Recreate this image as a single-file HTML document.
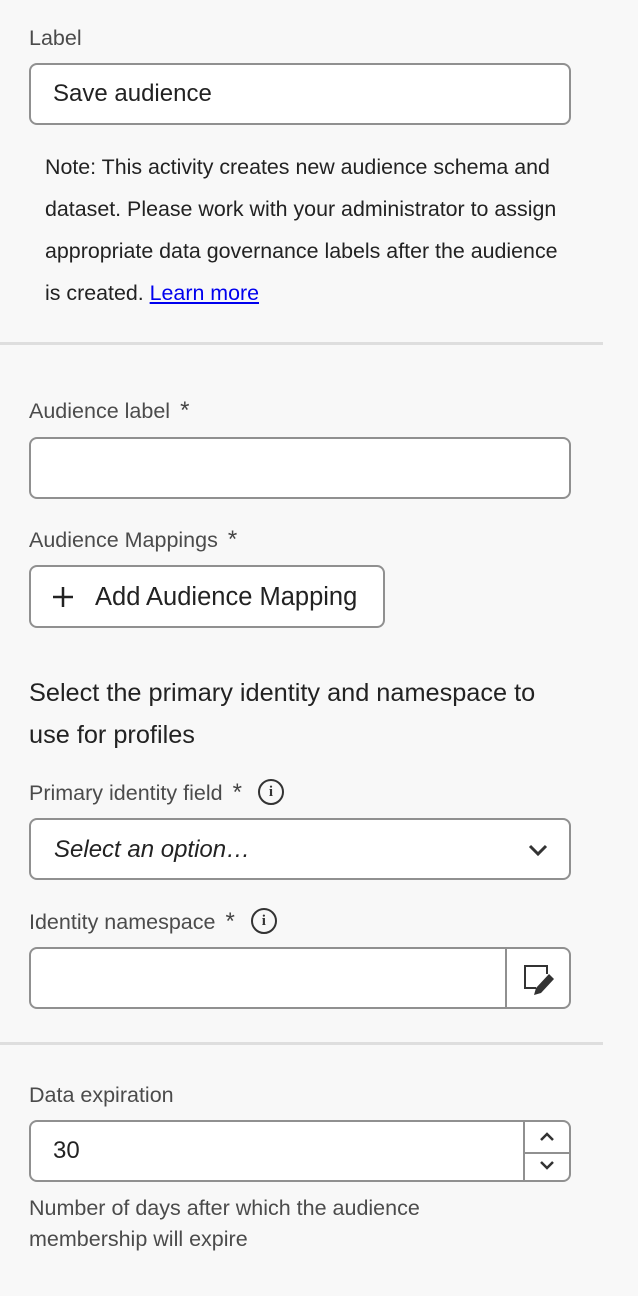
<!DOCTYPE html>
<html><head><style>
*{box-sizing:border-box;margin:0;padding:0}
body{width:638px;height:1296px;background:#f8f8f8;font-family:"Liberation Sans",sans-serif;color:#222;position:relative;overflow:hidden}
.a{position:absolute}
.lbl{font-size:21.5px;color:#4b4b4b;left:29px;line-height:26px;white-space:nowrap}
.inp{left:29px;width:542px;height:62px;background:#fff;border:2px solid #909090;border-radius:8px}
.hr{left:0;width:603px;height:3px;background:#dedede}
.star{font-size:24px;margin-left:10px;color:#444}
.info{display:inline-block;width:26px;height:26px;border:2px solid #333;border-radius:50%;vertical-align:middle;text-align:center;font:bold 15px/22px "Liberation Serif",serif;color:#333;margin-left:16px;margin-top:-4px}
</style></head><body>
<div class="a lbl" style="top:25px">Label</div>
<div class="a inp" style="top:63px"><span class="a" style="left:22px;top:15px;font-size:24px;color:#222">Save audience</span></div>
<div class="a" style="left:45px;top:146px;font-size:21.4px;line-height:42px;color:#222;white-space:nowrap">Note: This activity creates new audience schema and<br>dataset. Please work with your administrator to assign<br>appropriate data governance labels after the audience<br>is created. <a style="color:#0000ee;text-decoration:underline">Learn more</a></div>
<div class="a hr" style="top:342px"></div>
<div class="a lbl" style="top:398px">Audience label<span class="star">*</span></div>
<div class="a inp" style="top:437px"></div>
<div class="a lbl" style="top:527px">Audience Mappings<span class="star">*</span></div>
<div class="a" style="left:29px;top:565px;width:356px;height:63px;border:2px solid #909090;border-radius:8px;background:#fff">
<svg class="a" style="left:21px;top:19px" width="22" height="22"><path d="M11 1v20M1 11h20" stroke="#222" stroke-width="2.5"/></svg>
<span class="a" style="left:64px;top:16px;font-size:25.5px;color:#222;white-space:nowrap">Add Audience Mapping</span></div>
<div class="a" style="left:29px;top:672px;font-size:25.3px;line-height:42px;color:#222;white-space:nowrap">Select the primary identity and namespace to<br>use for profiles</div>
<div class="a lbl" style="top:780px">Primary identity field<span class="star">*</span><span class="info">i</span></div>
<div class="a inp" style="top:818px"><span class="a" style="left:23px;top:16px;font-size:24px;font-style:italic;color:#222">Select an option…</span>
<svg class="a" style="left:497px;top:23px" width="20" height="14"><path d="M2 3l8 8 8-8" stroke="#333" stroke-width="3" fill="none"/></svg></div>
<div class="a lbl" style="top:909px">Identity namespace<span class="star">*</span><span class="info">i</span></div>
<div class="a inp" style="top:947px"><div class="a" style="left:474px;top:0;width:2px;height:58px;background:#909090"></div>
<svg class="a" style="left:491px;top:14px" width="36" height="36"><path d="M14 25H3V3h22v8" stroke="#333" stroke-width="2" fill="none"/><path d="M12 32l2-7 13-14 5 5-13 14z" fill="#333"/></svg></div>
<div class="a hr" style="top:1042px"></div>
<div class="a lbl" style="top:1082px">Data expiration</div>
<div class="a inp" style="top:1120px"><span class="a" style="left:22px;top:15px;font-size:24px;color:#222">30</span>
<div class="a" style="left:492px;top:0;width:2px;height:58px;background:#909090"></div>
<div class="a" style="left:494px;top:30px;width:46px;height:1.5px;background:#909090"></div>
<svg class="a" style="left:508px;top:10px" width="16" height="10"><path d="M2 8l6-6 6 6" stroke="#333" stroke-width="2.5" fill="none"/></svg>
<svg class="a" style="left:508px;top:38px" width="16" height="10"><path d="M2 2l6 6 6-6" stroke="#333" stroke-width="2.5" fill="none"/></svg></div>
<div class="a lbl" style="top:1193px;line-height:31px">Number of days after which the audience<br>membership will expire</div>
</body></html>
